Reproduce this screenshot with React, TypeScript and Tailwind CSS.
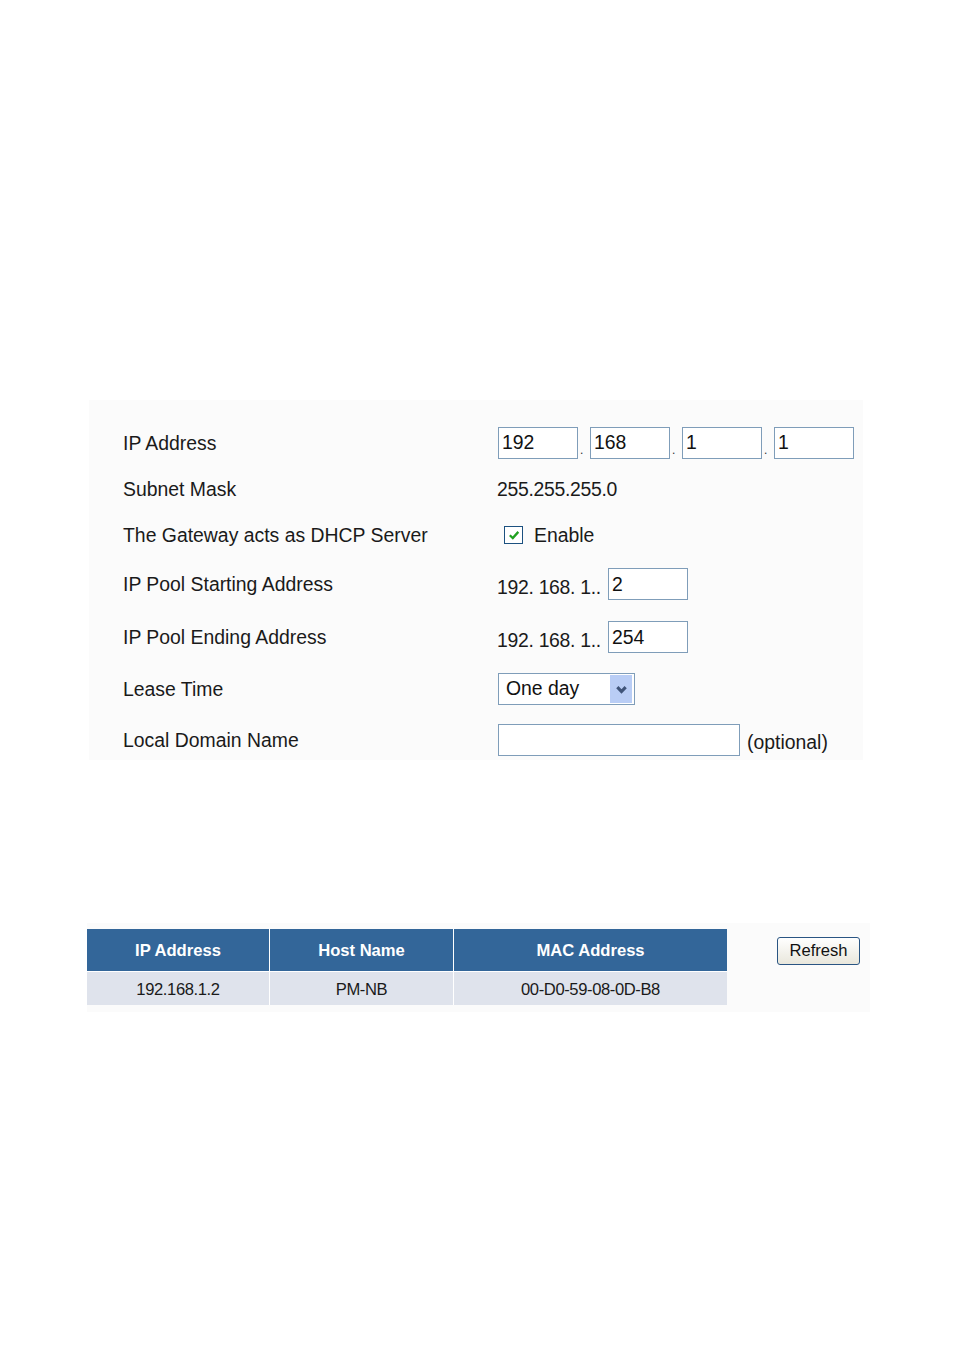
import React from 'react'

const font = "font-['Liberation_Sans',Arial,sans-serif]"

const Box = ({ value = '', w = 'w-[80px]' }: { value?: string; w?: string }) => (
  <div className={`flex h-[32px] ${w} shrink-0 items-center border border-[#7f9db9] bg-white pl-[3px] text-[19.4px] text-[#111]`}>
    {value}
  </div>
)

const Dot = () => (
  <div className="flex h-[32px] w-[12px] shrink-0 items-end pb-[3px] pl-[2px] text-[12px] leading-none text-[#333]">.</div>
)

const Row = ({ label, h, children }: { label: string; h: string; children: React.ReactNode }) => (
  <div className={`flex ${h} items-center`}>
    <div className="w-[409px] shrink-0 pl-[34px] pt-[1px] text-[#1a1a1a]">{label}</div>
    <div className="flex items-center">{children}</div>
  </div>
)

const Check = () => (
  <div className="ml-[6px] flex h-[18px] w-[19px] shrink-0 items-center justify-center border border-[#1c5180] bg-white">
    <svg viewBox="0 0 10 10" className="h-[12px] w-[12px]">
      <path d="M1.5 5.2 L4 7.6 L8.6 2.4" fill="none" stroke="#21a121" strokeWidth="1.9" />
    </svg>
  </div>
)

const App = () => {
  return (
    <div className={`h-[1353px] w-[954px] bg-white pt-[400px] ${font} text-[19.4px]`}>
      {/* settings panel */}
      <div className="ml-[89px] h-[360px] w-[774px] bg-[#fbfbfb] pt-[20px]">
        <Row label="IP Address" h="h-[46px]">
          <Box value="192" />
          <Dot />
          <Box value="168" />
          <Dot />
          <Box value="1" />
          <Dot />
          <Box value="1" />
        </Row>
        <Row label="Subnet Mask" h="h-[47px]">
          <span className="-ml-[1px] tracking-[-0.3px] text-[#1a1a1a]">255.255.255.0</span>
        </Row>
        <Row label="The Gateway acts as DHCP Server" h="h-[45px]">
          <Check />
          <span className="ml-[11px] text-[#1a1a1a]">Enable</span>
        </Row>
        <Row label="IP Pool Starting Address" h="h-[53px]">
          <span className="-ml-[1px] mt-[6px] w-[111px] tracking-[-0.3px] text-[#1a1a1a]">192. 168. 1..</span>
          <Box value="2" />
        </Row>
        <Row label="IP Pool Ending Address" h="h-[53px]">
          <span className="-ml-[1px] mt-[6px] w-[111px] tracking-[-0.3px] text-[#1a1a1a]">192. 168. 1..</span>
          <Box value="254" />
        </Row>
        <Row label="Lease Time" h="h-[50px]">
          <div className="flex h-[32px] w-[137px] items-center justify-between border border-[#7f9db9] bg-white pl-[7px] pr-[2px]">
            <span className="text-[#111]">One day</span>
            <div className="flex h-[28px] w-[22px] shrink-0 items-center justify-center bg-[#b9cdf5]">
              <svg viewBox="0 0 10 10" className="h-[13px] w-[13px]">
                <path d="M1.8 3.2 L5 6.6 L8.2 3.2" fill="none" stroke="#3f5479" strokeWidth="2.4" />
              </svg>
            </div>
          </div>
        </Row>
        <Row label="Local Domain Name" h="h-[52px]">
          <Box w="w-[242px]" />
          <span className="ml-[7px] mt-[6px] text-[#1a1a1a]">(optional)</span>
        </Row>
      </div>

      {/* client table panel */}
      <div className="ml-[87px] mt-[163px] flex h-[89px] w-[783px] items-start bg-[#fbfbfb] pt-[6px]">
        <div className="flex flex-col gap-px bg-white">
          <div className="flex gap-px text-[16.6px] font-bold text-white">
            <div className="flex h-[42px] w-[182px] items-center justify-center bg-[#336699] pt-[2px]">IP Address</div>
            <div className="flex h-[42px] w-[183px] items-center justify-center bg-[#336699] pt-[2px]">Host Name</div>
            <div className="flex h-[42px] w-[273px] items-center justify-center bg-[#336699] pt-[2px]">MAC Address</div>
          </div>
          <div className="flex gap-px text-[16.6px] tracking-[-0.4px] text-[#1a1a1a]">
            <div className="flex h-[33px] w-[182px] items-center justify-center bg-[#dfe3ec] pt-[3px]">192.168.1.2</div>
            <div className="flex h-[33px] w-[183px] items-center justify-center bg-[#dfe3ec] pt-[3px]">PM-NB</div>
            <div className="flex h-[33px] w-[273px] items-center justify-center bg-[#dfe3ec] pt-[3px]">00-D0-59-08-0D-B8</div>
          </div>
        </div>
        <button className="ml-[50px] mt-[8px] h-[28px] w-[83px] rounded-[3px] border border-[#2a5583] bg-gradient-to-b from-white to-[#e9e7dc] text-[16.6px] text-[#111]">
          Refresh
        </button>
      </div>
    </div>
  )
}

export default App
